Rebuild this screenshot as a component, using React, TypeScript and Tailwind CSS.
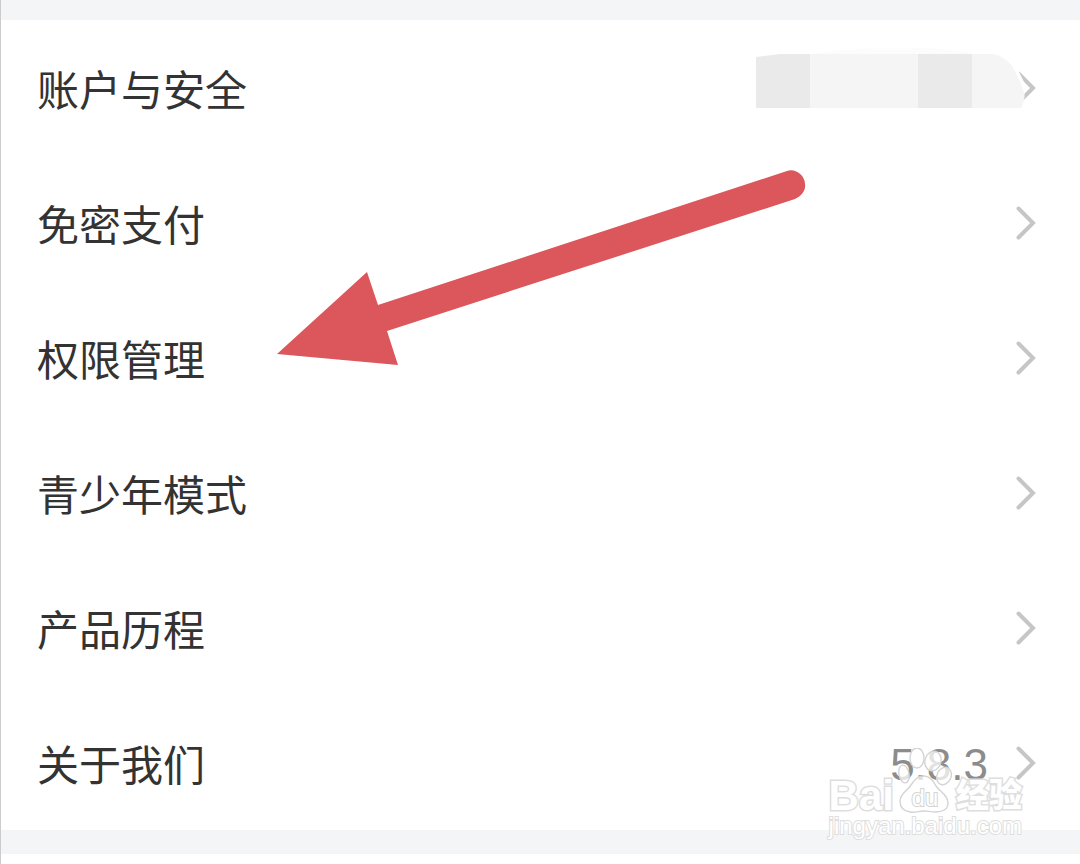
import { ReactNode } from "react";

interface SettingItem {
  label: string;
  extra?: ReactNode;
}

const ChevronIcon = () => (
  <svg
    viewBox="0 0 20 36"
    aria-hidden="true"
    className="h-9 w-5 shrink-0 fill-none stroke-[#c6c6c6]"
  >
    <path d="M2.5 3.5 L17 18 L2.5 32.5" strokeWidth="4" strokeLinecap="round" />
  </svg>
);

const AccountMask = () => (
  <svg
    viewBox="0 0 272 80"
    aria-hidden="true"
    className="relative -mr-3 h-20 w-[272px] shrink-0"
  >
    <path d="M54 6 C90 0 175 -4 215 5 L215 12 H54 Z" fill="#fcfcfc" />
    <path d="M0 9 L24 6 H54 V60 H0 Z" fill="#eaeaea" />
    <path d="M54 6 H162 V60 H54 Z" fill="#f5f5f5" />
    <path d="M162 6 H216 V60 H162 Z" fill="#eaeaea" />
    <path d="M255 14 L261 20 L270 38 L267 52 L264 60 H255 Z" fill="#ffffff" />
    <path d="M216 6 H237 Q248 8 256 18 Q264 32 268 44 Q270 52 265 60 H216 Z" fill="#f5f5f5" />
  </svg>
);

const items: SettingItem[] = [
  { label: "账户与安全", extra: <AccountMask /> },
  { label: "免密支付" },
  { label: "权限管理" },
  { label: "青少年模式" },
  { label: "产品历程" },
  {
    label: "关于我们",
    extra: (
      <span className="pt-1 pr-7 font-['Liberation_Sans',sans-serif] text-[44px] text-[#8c8c8c]">
        5.8.3
      </span>
    ),
  },
];

const SettingRow = ({ label, extra }: SettingItem) => (
  <li>
    <a
      href="#"
      className="flex h-[135px] items-center justify-between pr-11 pl-9 text-[42px] leading-[60px] text-[#333333]"
    >
      <span>{label}</span>
      <span className="flex items-center">
        {extra}
        <ChevronIcon />
      </span>
    </a>
  </li>
);

const PointerArrow = () => (
  <svg
    viewBox="0 0 530 200"
    aria-hidden="true"
    className="pointer-events-none absolute top-[148px] left-[275px] h-[200px] w-[530px] fill-[#db575c]"
  >
    <path d="M1 186 L91 104 L102 137 L511 3 C520 0 529 8 529 16 C530 22 526 28 519 31 L111 163 L122 197 Z" />
  </svg>
);

const Watermark = () => (
  <div className="pointer-events-none absolute right-[58px] bottom-4 flex flex-col font-['Liberation_Sans','Noto_Sans_CJK_SC',sans-serif] text-white [paint-order:stroke] [-webkit-text-stroke:3px_#dedede]">
    <div className="flex items-end justify-between font-bold">
      <span className="text-[42px] leading-9">Bai</span>
      <span className="relative flex h-[66px] w-[54px] items-end justify-center">
        <svg
          viewBox="0 0 54 66"
          aria-hidden="true"
          className="absolute inset-0 size-full fill-white/75 stroke-[#d4d4d4] stroke-[1.4] [paint-order:normal]"
        >
          <ellipse cx="19" cy="10" rx="7" ry="10" />
          <ellipse cx="35" cy="13" rx="8" ry="10" transform="rotate(15 35 13)" />
          <ellipse cx="46" cy="28" rx="7" ry="9" transform="rotate(25 46 28)" />
          <ellipse cx="6" cy="26" rx="5" ry="9" transform="rotate(-10 6 26)" />
          <path d="M26 28 C32 28 35 32 38 38 C42 44 50 47 50 55 C50 61 45 64 38 64 C32 64 30 63 26 63 C21 63 17 65 12 64 C5 63 2 59 2 53 C2 46 9 43 13 37 C17 31 20 28 26 28 Z" />
        </svg>
        <span className="relative pb-1 text-2xl leading-6 font-normal [-webkit-text-stroke:2px_#d4d4d4]">
          du
        </span>
      </span>
      <span className="text-[33px] leading-9 font-black">经验</span>
    </div>
    <span className="text-2xl leading-6 [-webkit-text-stroke:2px_#dedede]">
      jingyan.baidu.com
    </span>
  </div>
);

const App = () => {
  return (
    <main className="min-h-screen border-l border-[#cccccc] bg-white font-['Noto_Sans_CJK_SC',sans-serif]">
      <div className="h-5 bg-[#f4f5f7]" />
      <nav className="relative">
        <ul>
          {items.map((item) => (
            <SettingRow key={item.label} {...item} />
          ))}
        </ul>
        <PointerArrow />
        <div className="h-6 bg-[#f4f5f7]" />
        <Watermark />
      </nav>
    </main>
  );
};

export default App;
